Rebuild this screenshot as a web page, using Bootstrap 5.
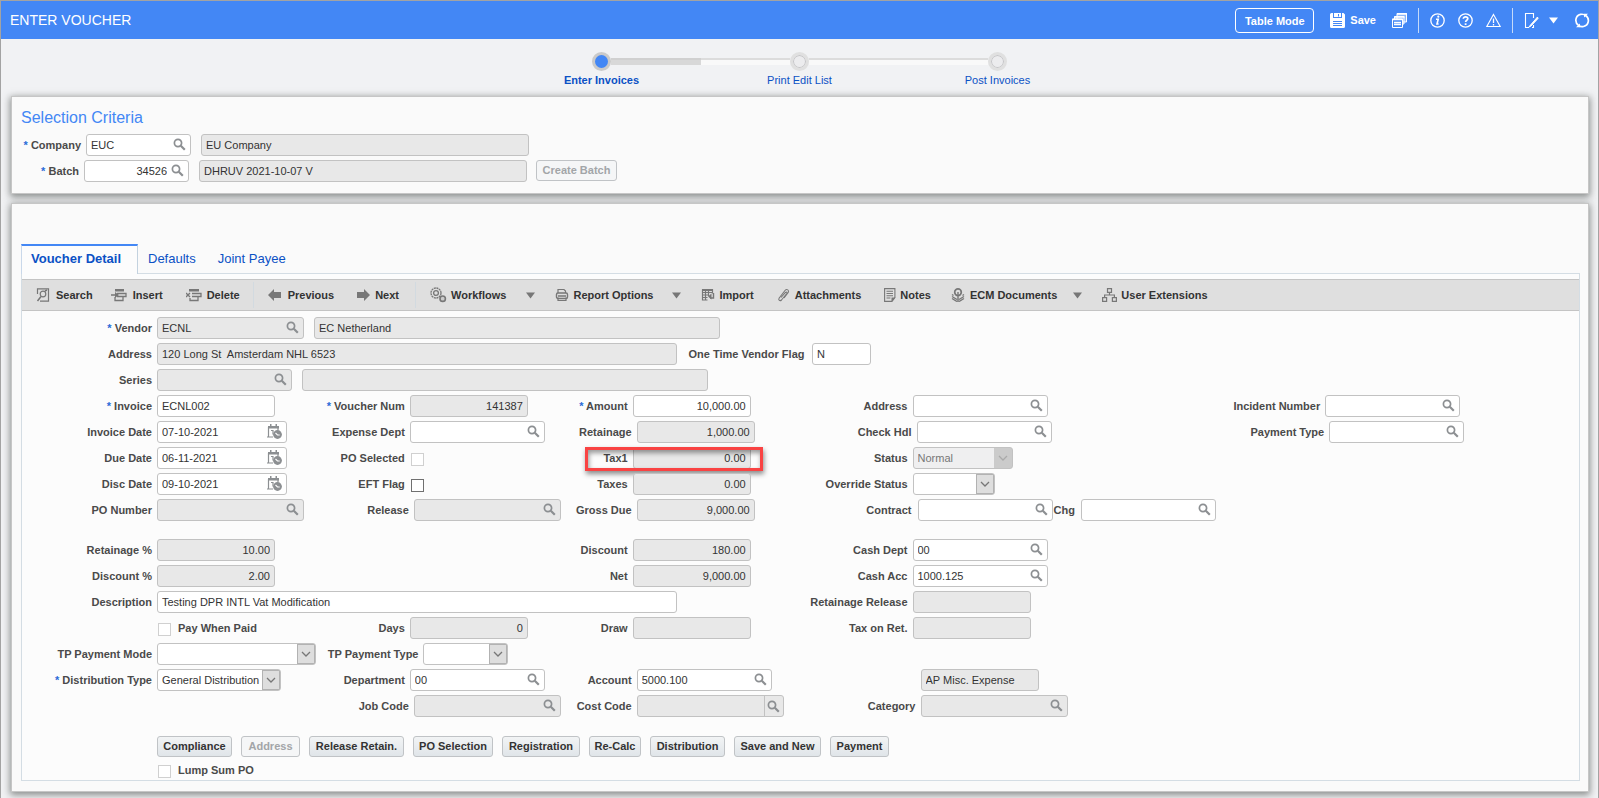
<!DOCTYPE html>
<html lang="en">
<head>
<meta charset="utf-8">
<meta name="viewport" content="width=device-width, initial-scale=1">
<title>Enter Voucher</title>
<link href="https://cdn.jsdelivr.net/npm/bootstrap@5.3.0/dist/css/bootstrap.min.css" rel="stylesheet">
<style>
body{font-family:"Liberation Sans",Arial,sans-serif;font-size:11px;line-height:16px;color:#333;background:#f1f2f4;border:1px solid #a3a3a3;min-height:100vh}
svg{display:block;flex:none}
a{text-decoration:none}
.topbar{background:#4387f5;height:38px;padding:0 8px 0 9px;color:#fff}
.topbar h1{font-size:14px;line-height:20px}
.topbar button{color:#fff;background:none;border:0;padding:0;font-weight:700;font-size:11px}
.topbar .mode-btn{border:1px solid #fff;border-radius:4px;width:79px;height:25px;padding-top:1px}
.bar-sep{width:1px;height:25px;background:#c5daf9;margin:0 11px}
.icon-set{display:flex;align-items:center;gap:13px}
.stepper{height:57px;padding-top:12px}
.step{width:198px;color:#0b51c5;text-align:center}
.step:hover{color:#0b51c5}
.step-track{height:20px;margin-bottom:1px}
.rail{flex:1;height:7px;background:#f9f9f9;border-top:2px solid #dcdcdc}
.rail.off{visibility:hidden}
.rail.done{background:#d8d8d8;border-color:#d0d0d0}
.dot{width:19px;height:19px;border-radius:50%;border:3px solid #e0e0e0;background:#ececee;box-shadow:inset 0 0 0 1px #c4c4c6}
.dot.on{background:#4387f5;border-color:#cacaca;box-shadow:none}
.panel{margin:0 9px 0 10px;background:#fafafa;border:1px solid #c6c6c6;box-shadow:0 2px 7px 1px rgba(70,75,72,.6)}
.criteria{padding:11px 9px;margin-bottom:9px}
.criteria h2{font-size:16px;line-height:20px;color:#4387f5;margin:0 0 6px}
.criteria .lov+.fld{margin-left:5px}
.detail{padding:40px 8px 10px 9px;margin-bottom:6px}
.tabs{font-size:13px;line-height:20px}
.tabs a{color:#0b51c5;padding:3px 11px 5px;border-top:2px solid transparent;height:30px}
.tabs a.active{font-weight:700;width:117px;padding-left:9px;background:#fcfcfc;border-top-color:#4387f5;border-left:1px solid #c9d8ea;border-right:1px solid #c3d2df}
.tab-body{border:1px solid #d4dde4;background:#fcfcfc;margin-top:-1px;padding-top:5px}
.tools{background:#dfdfdf;border-top:1px solid #c4c4c4;border-bottom:1px solid #c4c4c4;height:32px;padding-left:14px}
.tools button{background:none;border:0;padding:0;font-weight:700;display:flex;align-items:center;gap:5px;color:#333;margin-right:20px}
.tools svg{color:#777}
.tools .g4{gap:4px}.tools .g6{gap:6px}
.tools .m13{margin-right:13px}.tools .m16{margin-right:16px}.tools .m18{margin-right:18px}.tools .m23{margin-right:23px}
.tool-sep{width:1px;height:26px;background:#d2dae0;margin-right:14px}
.form-area{padding:6px 0 0}
.vrow{display:grid;grid-template-columns:298fr 250fr 230fr 425fr 355fr;height:22px;margin-bottom:4px}
.cell{display:flex;gap:5px;min-width:0;white-space:nowrap;position:relative}
.c1{grid-column-start:1}.c2{grid-column-start:2}.c3{grid-column-start:3}.c4{grid-column-start:4}.c5{grid-column-start:5}
.cell.wide{grid-column-end:4}
.cell.full{grid-column-end:6}
.cell>label{flex:none;text-align:right;font-weight:700;color:#4a4a4a;line-height:21px;padding-top:1px;height:22px}
.c1>label:first-child{width:130px}.c2>label:first-child{min-width:85px}.c3>label:first-child{width:58px}.c4>label:first-child{width:108px}.c5>label:first-child{width:96px}
.cell.nudge>label:first-child{margin-left:4px}
.cell.nudge-2>label:first-child{margin-left:8px}
.cell>.otv{width:121px;text-align:center}
.req::before{content:"* ";color:#2a6bd8}
.fld{flex:none;width:118px;height:22px;border:1px solid #c2c2c2;border-radius:3px;background:#fff;color:#333;font-size:11px;line-height:20px;padding:0 4px;min-height:0}
input.fld:read-only,.fld.ro{background:#e8e8e8}
.num{text-align:right}
.lov{display:flex;align-items:center;padding-right:4px;width:135px}
.lov input{flex:1;min-width:0;height:20px;border:0;padding:0;background:none;color:#333;outline:0}
.lov button{border:0;background:none;padding:0;width:13px;margin-bottom:1px;color:#8c8f92}
.lov.split button{border-left:1px solid #c2c2c2;height:20px;width:17px;padding-left:2px;margin:0 -2px 0 0}
.w59{width:59px}.w82{width:82px}.w85{width:85px}.w100{width:100px}.w105{width:105px}.w124{width:124px}.w130{width:130px}.w147{width:147px}.w159{width:159px}.w328{width:328px}.w406{width:406px}.w520{width:520px}
.w406{margin-left:5px}
select.fld{appearance:none;padding-right:18px;background:#fff url("data:image/svg+xml,%3Csvg xmlns='http://www.w3.org/2000/svg' width='18' height='20'%3E%3Crect width='18' height='20' fill='%23dedede'/%3E%3Cpath d='M.5 0v20M17.5 0v20M0 .5h18M0 19.5h18' stroke='%23b2b2b2'/%3E%3Cpath d='M5 8l4 4 4-4' fill='none' stroke='%23777' stroke-width='1.3'/%3E%3C/svg%3E") no-repeat right center}
select.fld:disabled{color:#777;opacity:1;background:#efeff0 url("data:image/svg+xml,%3Csvg xmlns='http://www.w3.org/2000/svg' width='18' height='20'%3E%3Crect width='18' height='20' fill='%23cbcbcb'/%3E%3Cpath d='M5 8l4 4 4-4' fill='none' stroke='%23aaa' stroke-width='1.3'/%3E%3C/svg%3E") no-repeat right center}
.chk{appearance:none;flex:none;width:13px;height:13px;border:1px solid #707070;background:#fff;margin:6px 0 0 1px}
.chk:disabled{border-color:#d0d0d0}
.chk+label{margin-left:2px}
.gap-row{margin-bottom:18px}
.act{height:21px;border:1px solid #c0c3c6;border-radius:3px;background:linear-gradient(#f2f4f5,#e0e5e9);font-size:11px;font-weight:700;line-height:17px;color:#333;padding:0;flex:none}
.act:disabled{color:#a2a5a8;background:#f5f6f7}
.mark-box{position:absolute;left:15px;top:0;width:178px;height:24px;border:3px solid #f94343;box-shadow:1px 3px 5px rgba(0,0,0,.45),inset 1px 3px 5px rgba(0,0,0,.4);pointer-events:none}
</style>
</head>
<body>
<svg width="0" height="0" class="position-absolute" aria-hidden="true">
<symbol id="mag" viewBox="0 0 13 13"><circle cx="5" cy="5" r="3.6" fill="none" stroke="currentColor" stroke-width="1.7"/><path d="M7.8 7.8l4 4" stroke="currentColor" stroke-width="2.2"/></symbol>
<symbol id="cal" viewBox="0 0 15 15"><path d="M1.500 13V3M0 13h6M1 3h10v3" fill="none" stroke="currentColor" stroke-width="1.200"/><path d="M1 2h11v2.500H1zM3 0h1.500v2H3zM8.500 0H10v2H8.500z" fill="currentColor"/><path d="M4 6.500h2v4" fill="none" stroke="currentColor" stroke-width="1.200"/><circle cx="10.500" cy="10.500" r="4.400" fill="currentColor"/><path d="M8.500 9l2 2h2.200" fill="none" stroke="#fff" stroke-width="1.100"/></symbol>
<symbol id="caret" viewBox="0 0 9 7"><path d="M0 .5h9l-4.500 6z" fill="currentColor"/></symbol>
</svg>

<header class="topbar d-flex align-items-center">
  <h1 class="m-0 me-auto fw-normal">ENTER VOUCHER</h1>
  <button type="button" class="mode-btn">Table Mode</button>
  <button type="button" class="d-flex align-items-center ms-3" style="gap:5px"><svg width="15" height="15" viewBox="0 0 15 15"><path d="M0 1.500Q0 0 1.500 0H3v5h9V0h1.500L15 1.500V13.500Q15 15 13.500 15h-12Q0 15 0 13.500z" fill="#fff"/><path d="M4 0h7v4H4z" fill="#fff"/><path d="M8.500 1v2.500M3 8.500h9M3 10.500h9M3 12.500h9" stroke="#4387f5" stroke-width="1"/></svg>Save</button>
  <button type="button" class="ms-3" aria-label="Windows"><svg width="15" height="15" viewBox="0 0 15 15"><path d="M5 .5h9.500v8.500H5zM2.500 3.500H12V11H2.500z" fill="#8db6f9" stroke="#fff"/><path d="M.5 6h10v8.500H.5z" fill="#4387f5" stroke="#fff"/><path d="M0 6.500h11M5 1h10M2.500 4h10M2 9.500h7M2 11.500h7" stroke="#fff" stroke-width="1.500"/></svg></button>
  <span class="bar-sep"></span>
  <div class="icon-set">
  <button type="button" aria-label="Information"><svg width="15" height="15" viewBox="0 0 15 15"><circle cx="7.500" cy="7.500" r="6.700" fill="none" stroke="#fff" stroke-width="1.300"/><path d="M6 6.200h2.200L7 11h1.600" fill="none" stroke="#fff" stroke-width="1.600"/><circle cx="8.300" cy="3.700" r="1.100" fill="#fff"/></svg></button>
  <button type="button" aria-label="Help"><svg width="15" height="15" viewBox="0 0 15 15"><circle cx="7.500" cy="7.500" r="6.700" fill="none" stroke="#fff" stroke-width="1.300"/><path d="M5.300 5.800c0-2.600 4.500-2.600 4.500 0 0 1.500-2.200 1.500-2.200 3.200" fill="none" stroke="#fff" stroke-width="1.700"/><path d="M6.700 10.300h1.800V12H6.700z" fill="#fff"/></svg></button>
  <button type="button" aria-label="Warnings"><svg width="15" height="15" viewBox="0 0 15 15"><path d="M7.500 1.500L14.200 13.500H.8z" fill="none" stroke="#fff" stroke-width="1.100"/><path d="M7.500 5.500v4.500M7.500 11v1.500" stroke="#fff" stroke-width="1.300"/></svg></button>
  </div>
  <span class="bar-sep"></span>
  <button type="button" aria-label="Personalize"><svg width="15" height="15" viewBox="0 0 15 15"><path d="M9.500 5V.5h-8v14h3.500M9.500 12v2.500H8" fill="none" stroke="#fff" stroke-width="1.100"/><path d="M13.500 4L6.500 12l-1.500 2 2-1L14 5.500z" fill="#fff" stroke="#fff" stroke-width="1"/></svg></button>
  <button type="button" style="margin-left:10px" aria-label="More"><svg width="9" height="7"><use href="#caret"/></svg></button>
  <button type="button" class="ms-3" aria-label="Refresh"><svg width="16" height="15" viewBox="0 0 16 15"><path d="M4.500 12.200A6 6 0 0 1 6.500 1.400c2-.4 4 0 5.500 1.600M11.500 2.500A6 6 0 0 1 9.500 13.500c-2 .4-4-.2-5-1.200" fill="none" stroke="#fff" stroke-width="1.700"/><path d="M2 14.200h4V10.500zM14 .8h-4V4.500z" fill="#fff"/></svg></button>
</header>

<nav class="stepper d-flex justify-content-center" aria-label="Steps">
  <a href="#" class="step fw-bold"><span class="step-track d-flex align-items-center"><span class="rail off"></span><span class="dot on"></span><span class="rail done"></span></span>Enter Invoices</a>
  <a href="#" class="step"><span class="step-track d-flex align-items-center"><span class="rail"></span><span class="dot"></span><span class="rail"></span></span>Print Edit List</a>
  <a href="#" class="step"><span class="step-track d-flex align-items-center"><span class="rail"></span><span class="dot"></span><span class="rail off"></span></span>Post Invoices</a>
</nav>

<main>
<section class="panel criteria">
  <h2 class="fw-normal">Selection Criteria</h2>
  <div class="cell mb-1">
    <label for="company" class="req" style="width:60px">Company</label>
    <span class="fld lov w105"><input id="company" value="EUC"><button type="button" aria-label="Find company"><svg width="13" height="13"><use href="#mag"/></svg></button></span>
    <input class="fld w328" aria-label="Company name" value="EU Company" readonly>
  </div>
  <div class="cell">
    <label for="batch" class="req" style="width:58px">Batch</label>
    <span class="fld lov w105"><input id="batch" class="num pe-1" value="34526"><button type="button" aria-label="Find batch"><svg width="13" height="13"><use href="#mag"/></svg></button></span>
    <input class="fld w328" aria-label="Batch name" value="DHRUV 2021-10-07 V" readonly>
    <button type="button" class="act ms-1" style="width:81px" disabled>Create Batch</button>
  </div>
</section>

<section class="panel detail">
  <nav class="tabs d-flex">
    <a href="#" class="active">Voucher Detail</a><a href="#" style="padding-left:10px">Defaults</a><a href="#">Joint Payee</a>
  </nav>
  <div class="tab-body">
    <div class="tools d-flex align-items-center">
      <button type="button" class="g6 m18"><svg width="14" height="14" viewBox="0 0 14 14"><path d="M1.500 6V.8h11v12.400H4" fill="none" stroke="currentColor" stroke-width="1.200"/><circle cx="7" cy="6" r="2.800" fill="none" stroke="currentColor" stroke-width="1.200"/><path d="M5 8.500L1.500 13M9 3l2-1" stroke="currentColor" stroke-width="1.500"/></svg>Search</button>
      <button type="button" class="g6 m23"><svg width="16" height="14" viewBox="0 0 16 14"><path d="M4 1h9v2.500H4z" fill="currentColor"/><path d="M6 5.500h9v3H6M4 9v3.500h8V9M0 7h5" fill="none" stroke="currentColor" stroke-width="1.300"/><path d="M4 4l4 3-4 3z" fill="currentColor"/></svg>Insert</button>
      <button type="button" class="m13"><svg width="16" height="14" viewBox="0 0 16 14"><path d="M3 1h10v2.500H3z" fill="currentColor"/><path d="M6 5.500h9v3H6M4 10v2.500h8V9M0 5l4 4M4 5L0 9" fill="none" stroke="currentColor" stroke-width="1.300"/></svg>Delete</button>
      <span class="tool-sep"></span>
      <button type="button" class="g6 m23"><svg width="14" height="12" viewBox="0 0 14 12"><path d="M0 6l6-6v3h7v6H6v3z" fill="currentColor"/></svg>Previous</button>
      <button type="button" class="g4 m16"><svg width="14" height="12" viewBox="0 0 14 12"><path d="M13 6L7 0v3H0v6h7v3z" fill="currentColor"/></svg>Next</button>
      <span class="tool-sep"></span>
      <button type="button" class="g4"><svg width="17" height="16" viewBox="0 0 17 16"><circle cx="6" cy="6" r="5" fill="none" stroke="currentColor" stroke-width="1.300" stroke-dasharray="2 .6"/><circle cx="6" cy="6" r="2.400" fill="none" stroke="currentColor" stroke-width="1.300"/><circle cx="12.700" cy="11.700" r="2.700" fill="#ccc" stroke="currentColor" stroke-width="1.600"/></svg>Workflows</button>
      <button type="button" aria-label="Workflow menu"><svg width="9" height="7"><use href="#caret"/></svg></button>
      <button type="button" class="g4 m18"><svg width="14" height="14" viewBox="0 0 14 14"><path d="M3 5V1.500h6l1.500 1.500v2M3 9.500v3h8v-3" fill="none" stroke="currentColor" stroke-width="1.200"/><rect x="1.500" y="5" width="11" height="5.500" rx="1.500" fill="none" stroke="currentColor" stroke-width="1.400"/><path d="M3 8h8" stroke="currentColor" stroke-width="1.500"/></svg>Report Options</button>
      <button type="button" aria-label="Report menu"><svg width="9" height="7"><use href="#caret"/></svg></button>
      <button type="button" class="m23"><svg width="14" height="14" viewBox="0 0 14 14"><path d="M1.500 1.500h10v4M1.500 1.500v10.500h5M1.500 4.500h10M1.500 7h6M1.500 9.500h5M4.500 2v10M7.500 2v6" fill="none" stroke="currentColor" stroke-width="1.200"/><path d="M1 1h11v2H1zM7 8.500l3.500-3v6z" fill="currentColor"/><path d="M12.500 5v5H9" fill="none" stroke="currentColor" stroke-width="1.400"/></svg>Import</button>
      <button type="button" class="m23"><svg width="13" height="14" viewBox="0 0 13 14"><path d="M4 9.500l4.500-5c1-1 2 0 1.300 1L4.500 12c-1.500 1.500-3.600 0-2.300-2L8 2.500c1.800-2 4.500-.3 3.200 2L7 10" fill="none" stroke="currentColor" stroke-width="1.100"/></svg>Attachments</button>
      <button type="button" class="g4"><svg width="12" height="14" viewBox="0 0 12 14"><path d="M.6.6h10.300v9L8 13.400H.6zM2.500 3.200h6.500M2.500 5.500h6.500M2.500 7.700h6.500M2.500 10h4" fill="none" stroke="currentColor" stroke-width="1.100"/><path d="M7.500 13.500v-4h4z" fill="currentColor"/></svg>Notes</button>
      <button type="button" class="m16"><svg width="14" height="14" viewBox="0 0 14 14"><circle cx="7" cy="4.200" r="3.300" fill="none" stroke="currentColor" stroke-width="1.700"/><path d="M7 4v10M1 6.500l1.500 1M1 8.500l5 3M1 10.500l5 3M13 6.500l-1.500 1M13 8.500l-5 3M13 10.500l-5 3" stroke="currentColor" stroke-width="1.400"/></svg>ECM Documents</button>
      <button type="button" aria-label="ECM menu"><svg width="9" height="7"><use href="#caret"/></svg></button>
      <button type="button" class="g4"><svg width="15" height="14" viewBox="0 0 15 14"><path d="M5.500.6h4v3.800h-4zM.6 9.600h4v3.800h-4zM10.400 9.600h4v3.800h-4zM7.500 4.500V7M2.600 9.500V7h9.800v2.500" fill="none" stroke="currentColor" stroke-width="1.200"/></svg>User Extensions</button>
    </div>

    <form class="form-area">
      <div class="vrow"><div class="cell c1 full">
        <label for="vendor" class="req">Vendor</label>
        <span class="fld ro lov w147"><input id="vendor" value="ECNL" readonly><button type="button" aria-label="Find vendor"><svg width="13" height="13"><use href="#mag"/></svg></button></span>
        <input class="fld w406" aria-label="Vendor name" value="EC Netherland" readonly>
      </div></div>
      <div class="vrow"><div class="cell c1 full">
        <label for="addr">Address</label>
        <input class="fld w520" id="addr" value="120 Long St&nbsp; Amsterdam NHL 6523" readonly>
        <label for="otv" class="otv ms-1">One Time Vendor Flag</label>
        <input class="fld w59" id="otv" value="N">
      </div></div>
      <div class="vrow"><div class="cell c1 full">
        <label for="series">Series</label>
        <span class="fld ro lov"><input id="series" readonly><button type="button" aria-label="Find series"><svg width="13" height="13"><use href="#mag"/></svg></button></span>
        <input class="fld w406" aria-label="Series name" readonly>
      </div></div>
      <div class="vrow">
        <div class="cell c1"><label for="inv" class="req">Invoice</label><input class="fld" id="inv" value="ECNL002"></div>
        <div class="cell c2"><label for="vnum" class="req">Voucher Num</label><input class="fld num" id="vnum" value="141387" readonly></div>
        <div class="cell c3"><label for="amt" class="req">Amount</label><input class="fld num" id="amt" value="10,000.00"></div>
        <div class="cell c4"><label for="addr2">Address</label><span class="fld lov"><input id="addr2"><button type="button" aria-label="Find address"><svg width="13" height="13"><use href="#mag"/></svg></button></span></div>
        <div class="cell c5"><label for="incident">Incident Number</label><span class="fld lov"><input id="incident"><button type="button" aria-label="Find incident"><svg width="13" height="13"><use href="#mag"/></svg></button></span></div>
      </div>
      <div class="vrow">
        <div class="cell c1"><label for="invd">Invoice Date</label><span class="fld lov w130"><input id="invd" value="07-10-2021"><button type="button" class="w-auto" aria-label="Pick date"><svg width="15" height="15"><use href="#cal"/></svg></button></span></div>
        <div class="cell c2"><label for="expd">Expense Dept</label><span class="fld lov"><input id="expd"><button type="button" aria-label="Find department"><svg width="13" height="13"><use href="#mag"/></svg></button></span></div>
        <div class="cell c3 nudge"><label for="ret">Retainage</label><input class="fld num" id="ret" value="1,000.00" readonly></div>
        <div class="cell c4 nudge"><label for="chk">Check Hdl</label><span class="fld lov"><input id="chk"><button type="button" aria-label="Find handling"><svg width="13" height="13"><use href="#mag"/></svg></button></span></div>
        <div class="cell c5 nudge"><label for="ptype">Payment Type</label><span class="fld lov"><input id="ptype"><button type="button" aria-label="Find payment type"><svg width="13" height="13"><use href="#mag"/></svg></button></span></div>
      </div>
      <div class="vrow">
        <div class="cell c1"><label for="dued">Due Date</label><span class="fld lov w130"><input id="dued" value="06-11-2021"><button type="button" class="w-auto" aria-label="Pick date"><svg width="15" height="15"><use href="#cal"/></svg></button></span></div>
        <div class="cell c2"><label for="posel">PO Selected</label><input type="checkbox" class="chk" id="posel" disabled></div>
        <div class="cell c3"><label for="tax1">Tax1</label><input class="fld num" id="tax1" value="0.00" readonly><span class="mark-box"></span></div>
        <div class="cell c4"><label for="status">Status</label><select class="fld w100" id="status" disabled><option>Normal</option></select></div>
      </div>
      <div class="vrow">
        <div class="cell c1"><label for="discd">Disc Date</label><span class="fld lov w130"><input id="discd" value="09-10-2021"><button type="button" class="w-auto" aria-label="Pick date"><svg width="15" height="15"><use href="#cal"/></svg></button></span></div>
        <div class="cell c2"><label for="eft">EFT Flag</label><input type="checkbox" class="chk" id="eft"></div>
        <div class="cell c3"><label for="taxes">Taxes</label><input class="fld num" id="taxes" value="0.00" readonly></div>
        <div class="cell c4"><label for="ovr">Override Status</label><select class="fld w82" id="ovr"><option></option></select></div>
      </div>
      <div class="vrow gap-row">
        <div class="cell c1"><label for="pon">PO Number</label><span class="fld ro lov w147"><input id="pon" readonly><button type="button" aria-label="Find PO"><svg width="13" height="13"><use href="#mag"/></svg></button></span></div>
        <div class="cell c2 nudge"><label for="rel">Release</label><span class="fld ro lov w147"><input id="rel" readonly><button type="button" aria-label="Find release"><svg width="13" height="13"><use href="#mag"/></svg></button></span></div>
        <div class="cell c3 nudge"><label for="gross">Gross Due</label><input class="fld num" id="gross" value="9,000.00" readonly></div>
        <div class="cell c4 nudge" style="gap:6px"><label for="contract">Contract</label><span class="fld lov"><input id="contract"><button type="button" aria-label="Find contract"><svg width="13" height="13"><use href="#mag"/></svg></button></span><label for="chg" style="margin-left:-5px">Chg</label><span class="fld lov"><input id="chg"><button type="button" aria-label="Find change"><svg width="13" height="13"><use href="#mag"/></svg></button></span></div>
      </div>
      <div class="vrow">
        <div class="cell c1"><label for="retp">Retainage %</label><input class="fld num" id="retp" value="10.00" readonly></div>
        <div class="cell c3"><label for="disc">Discount</label><input class="fld num" id="disc" value="180.00" readonly></div>
        <div class="cell c4"><label for="cdept">Cash Dept</label><span class="fld lov"><input id="cdept" value="00"><button type="button" aria-label="Find cash department"><svg width="13" height="13"><use href="#mag"/></svg></button></span></div>
      </div>
      <div class="vrow">
        <div class="cell c1"><label for="discp">Discount %</label><input class="fld num" id="discp" value="2.00" readonly></div>
        <div class="cell c3"><label for="net">Net</label><input class="fld num" id="net" value="9,000.00" readonly></div>
        <div class="cell c4"><label for="cacc">Cash Acc</label><span class="fld lov"><input id="cacc" value="1000.125"><button type="button" aria-label="Find cash account"><svg width="13" height="13"><use href="#mag"/></svg></button></span></div>
      </div>
      <div class="vrow">
        <div class="cell c1 wide"><label for="desc">Description</label><input class="fld w520" id="desc" value="Testing DPR INTL Vat Modification"></div>
        <div class="cell c4"><label for="rrel">Retainage Release</label><input class="fld" id="rrel" readonly></div>
      </div>
      <div class="vrow">
        <div class="cell c1"><label></label><input type="checkbox" class="chk" id="pwp" disabled><label for="pwp">Pay When Paid</label></div>
        <div class="cell c2"><label for="days">Days</label><input class="fld num" id="days" value="0" readonly></div>
        <div class="cell c3"><label for="draw">Draw</label><input class="fld" id="draw" readonly></div>
        <div class="cell c4"><label for="taxret">Tax on Ret.</label><input class="fld" id="taxret" readonly></div>
      </div>
      <div class="vrow">
        <div class="cell c1"><label for="tpm">TP Payment Mode</label><select class="fld w159" id="tpm"><option></option></select></div>
        <div class="cell c2 nudge-2"><label for="tpt">TP Payment Type</label><select class="fld w85" id="tpt"><option></option></select></div>
      </div>
      <div class="vrow">
        <div class="cell c1"><label for="dist" class="req">Distribution Type</label><select class="fld w124" id="dist"><option>General Distribution</option></select></div>
        <div class="cell c2"><label for="dept">Department</label><span class="fld lov"><input id="dept" value="00"><button type="button" aria-label="Find department"><svg width="13" height="13"><use href="#mag"/></svg></button></span></div>
        <div class="cell c3 nudge"><label for="acct">Account</label><span class="fld lov"><input id="acct" value="5000.100"><button type="button" aria-label="Find account"><svg width="13" height="13"><use href="#mag"/></svg></button></span></div>
        <div class="cell c4 nudge-2"><label></label><input class="fld" aria-label="Account name" value="AP Misc. Expense" readonly></div>
      </div>
      <div class="vrow gap-row">
        <div class="cell c2 nudge"><label for="job">Job Code</label><span class="fld ro lov w147"><input id="job" readonly><button type="button" aria-label="Find job"><svg width="13" height="13"><use href="#mag"/></svg></button></span></div>
        <div class="cell c3 nudge"><label for="cost">Cost Code</label><span class="fld ro lov split w147"><input id="cost" readonly><button type="button" aria-label="Find cost code"><svg width="13" height="13"><use href="#mag"/></svg></button></span></div>
        <div class="cell c4 nudge-2"><label for="cat">Category</label><span class="fld ro lov w147"><input id="cat" readonly><button type="button" aria-label="Find category"><svg width="13" height="13"><use href="#mag"/></svg></button></span></div>
      </div>
      <div class="vrow"><div class="cell c1 full" style="gap:9px;padding:1px 0 0 135px">
        <button type="button" class="act" style="width:75px">Compliance</button>
        <button type="button" class="act" style="width:59px" disabled>Address</button>
        <button type="button" class="act" style="width:95px">Release Retain.</button>
        <button type="button" class="act" style="width:80px">PO Selection</button>
        <button type="button" class="act" style="width:78px">Registration</button>
        <button type="button" class="act" style="width:52px">Re-Calc</button>
        <button type="button" class="act" style="width:75px">Distribution</button>
        <button type="button" class="act" style="width:87px">Save and New</button>
        <button type="button" class="act" style="width:59px">Payment</button>
      </div></div>
      <div class="vrow mb-0" style="height:19px">
        <div class="cell c1"><label></label><input type="checkbox" class="chk mt-1" id="lump" disabled><label for="lump" class="p-0" style="line-height:18px">Lump Sum PO</label></div>
      </div>
    </form>
  </div>
</section>
</main>
<script src="https://cdn.jsdelivr.net/npm/bootstrap@5.3.0/dist/js/bootstrap.bundle.min.js"></script>
</body>
</html>
